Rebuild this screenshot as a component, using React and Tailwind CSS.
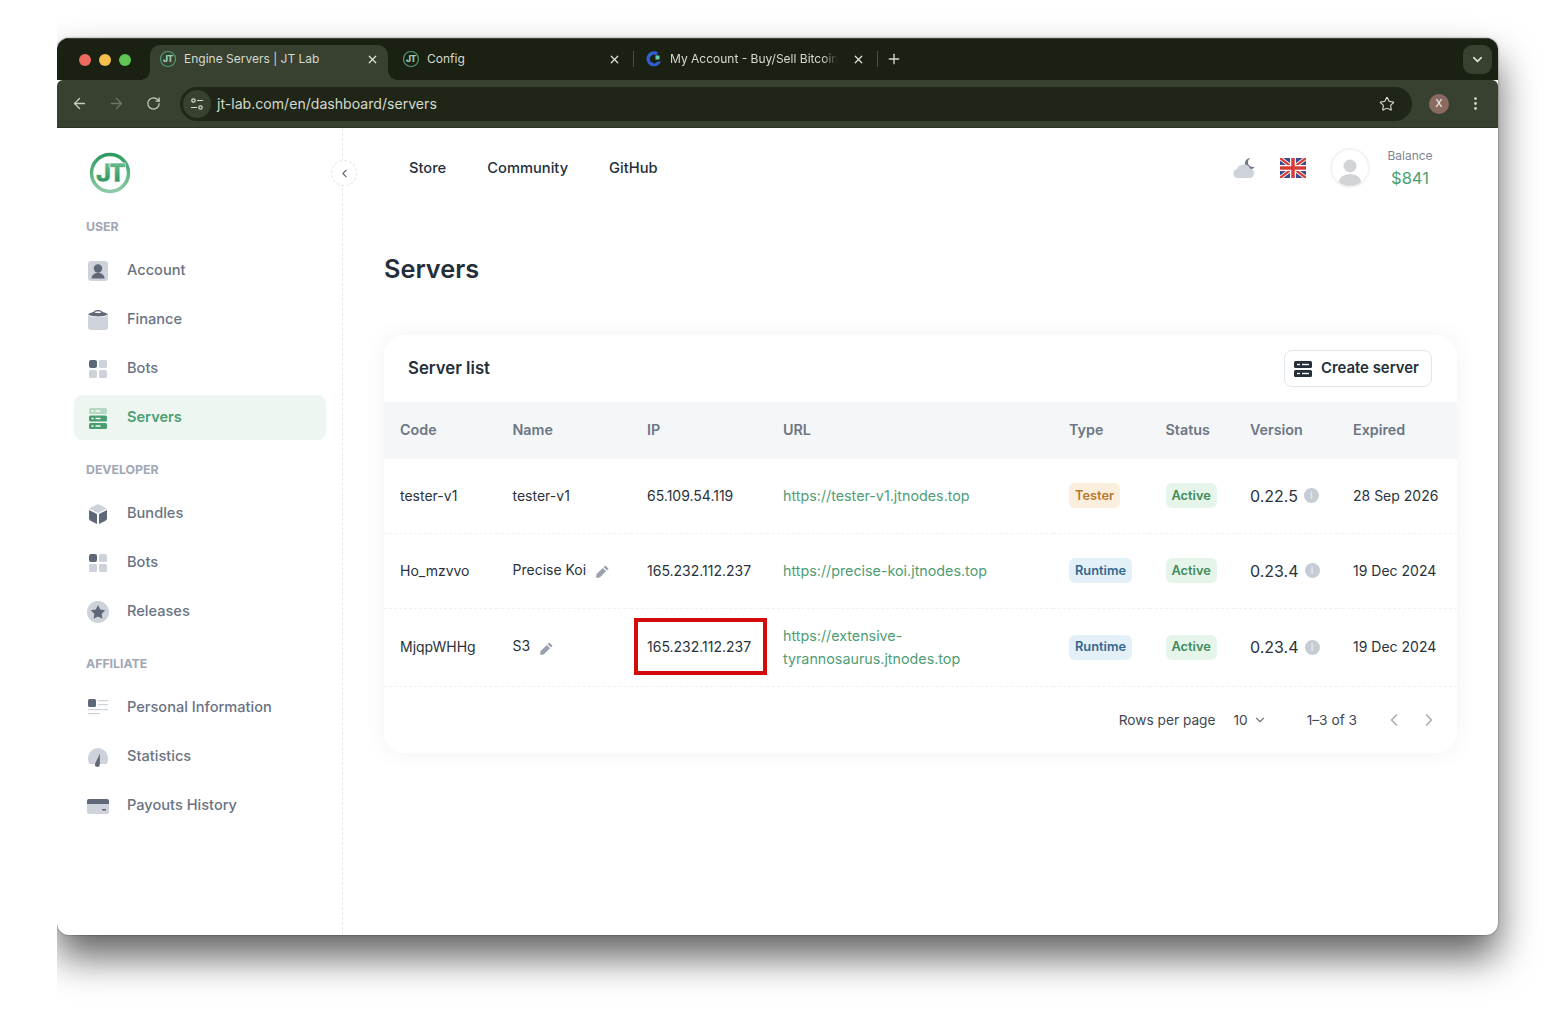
import React from "react";
import { ArrowLeft, ArrowRight, RotateCw, ChevronDown, ChevronLeft, ChevronRight, Plus, X, Star, EllipsisVertical } from "lucide-react";

const JtIcon = () => (
  <svg width="18" height="18" viewBox="0 0 18 18" className="shrink-0">
    <circle cx="9" cy="9" r="7.5" fill="none" stroke="#4f9d76" strokeWidth="1.2" />
    <text x="9" y="12" textAnchor="middle" fontSize="8.500" fontWeight="800" letterSpacing="-0.5" fill="#9fd0b3" fontFamily="Inter, sans-serif">JT</text>
  </svg>
);

const Logo = () => (
  <svg width="42" height="42" viewBox="0 0 42 42">
    <defs>
      <linearGradient id="jt-ring" x1="0" y1="0" x2="0" y2="1">
        <stop offset="0" stopColor="#2f9a62" />
        <stop offset="1" stopColor="#8ccaa5" />
      </linearGradient>
      <linearGradient id="jt-text" x1="0" y1="0" x2="0" y2="1">
        <stop offset="0" stopColor="#7cc49a" />
        <stop offset="1" stopColor="#1f8a50" />
      </linearGradient>
    </defs>
    <circle cx="21" cy="21" r="18.5" fill="none" stroke="url(#jt-ring)" strokeWidth="3.500" />
    <text x="20.500" y="30" textAnchor="middle" fontSize="26" fontWeight="900" letterSpacing="-3" fill="url(#jt-text)" stroke="#fff" strokeWidth="0.4" fontFamily="Inter, sans-serif">JT</text>
  </svg>
);

const light = "#ced2da";
const dark = "#5e6878";

const AccountIcon = () => (
  <svg width="24" height="24" viewBox="0 0 24 24">
    <rect x="2" y="2" width="20" height="20" rx="3" fill={light} />
    <circle cx="12" cy="9.5" r="4.2" fill={dark} />
    <path d="M5.5 19.5c0-3.5 3-5.5 6.5-5.5s6.500 2 6.500 5.500z" fill={dark} />
  </svg>
);
const FinanceIcon = () => (
  <svg width="24" height="24" viewBox="0 0 24 24">
    <path d="M2 7c4 3 16 3 20 0v12a3 3 0 0 1-3 3H5a3 3 0 0 1-3-3z" fill={light} />
    <path d="M2 6.500c1-1 3-2 5.500-2.500C8 2.800 9.500 2 12 2s4 .8 4.500 2c2.500.5 4.500 1.500 5.500 2.500-4 2.500-16 2.500-20 0z" fill={dark} />
    <rect x="9" y="3.500" width="6" height="1.500" rx=".7" fill="#fff" />
  </svg>
);
const BotsIcon = () => (
  <svg width="24" height="24" viewBox="0 0 24 24">
    <rect x="3" y="3" width="8" height="8" rx="2" fill={dark} />
    <rect x="13" y="3" width="8" height="8" rx="1.500" fill={light} />
    <rect x="3" y="13" width="8" height="8" rx="1.500" fill={light} />
    <rect x="13" y="13" width="8" height="8" rx="1.500" fill={light} />
  </svg>
);
const ServersIcon = () => (
  <svg width="24" height="24" viewBox="0 0 24 24">
    <rect x="3" y="2" width="18" height="6" rx="1.500" fill="#b4d9c3" />
    <rect x="3" y="9.500" width="18" height="6" rx="1.500" fill="#479e70" />
    <rect x="3" y="17" width="18" height="6" rx="1.500" fill="#479e70" />
    <rect x="5.500" y="4.300" width="2" height="1.400" fill="#fff" />
    <rect x="9.500" y="4.300" width="5" height="1.400" fill="#fff" />
    <rect x="5.500" y="11.800" width="2" height="1.400" fill="#fff" />
    <rect x="9.500" y="11.800" width="5" height="1.400" fill="#fff" />
    <rect x="5.500" y="19.300" width="2" height="1.400" fill="#fff" />
    <rect x="9.500" y="19.300" width="5" height="1.400" fill="#fff" />
  </svg>
);
const BundlesIcon = () => (
  <svg width="24" height="24" viewBox="0 0 24 24">
    <path d="M12 2l9 4.500-9 4.500-9-4.500z" fill={light} />
    <path d="M3 8l8 4v10l-6.500-3.200A2.500 2.500 0 0 1 3 16.600z" fill={dark} />
    <path d="M21 8l-8 4v10l6.500-3.200A2.500 2.500 0 0 0 21 16.600z" fill={dark} />
  </svg>
);
const ReleasesIcon = () => (
  <svg width="24" height="24" viewBox="0 0 24 24">
    <circle cx="12" cy="12" r="11" fill={light} />
    <path d="M12 5l2.200 4.600 5 .7-3.600 3.500.9 5L12 16.400l-4.500 2.400.9-5-3.600-3.500 5-.7z" fill={dark} />
  </svg>
);
const PersonalIcon = () => (
  <svg width="24" height="24" viewBox="0 0 24 24">
    <rect x="2" y="3" width="8" height="8" rx="1.500" fill={dark} />
    <rect x="12" y="4" width="10" height="1.200" fill={light} />
    <rect x="12" y="8" width="10" height="1.200" fill={light} />
    <rect x="2" y="13" width="20" height="1.200" fill={light} />
    <rect x="2" y="17" width="12" height="1.200" fill={light} />
  </svg>
);
const StatsIcon = () => (
  <svg width="24" height="24" viewBox="0 0 24 24">
    <path d="M2 13a10 10 0 0 1 20 0c0 2.500-.5 4.500-1.500 6H3.500C2.500 17.500 2 15.500 2 13z" fill={light} />
    <path d="M14 8.500l-.2 11.300a2.400 2.400 0 1 1-4.600-1.200z" fill={dark} />
  </svg>
);
const PayoutsIcon = () => (
  <svg width="24" height="24" viewBox="0 0 24 24">
    <path d="M1 8h22v10a2 2 0 0 1-2 2H3a2 2 0 0 1-2-2z" fill={light} />
    <path d="M3 5h18a2 2 0 0 1 2 2v3H1V7a2 2 0 0 1 2-2z" fill={dark} />
    <rect x="16" y="15" width="4" height="1.500" fill={dark} />
  </svg>
);

const sections = [
  { title: "USER", items: [
    { label: "Account", icon: AccountIcon },
    { label: "Finance", icon: FinanceIcon },
    { label: "Bots", icon: BotsIcon },
    { label: "Servers", icon: ServersIcon, active: true },
  ] },
  { title: "DEVELOPER", items: [
    { label: "Bundles", icon: BundlesIcon },
    { label: "Bots", icon: BotsIcon },
    { label: "Releases", icon: ReleasesIcon },
  ] },
  { title: "AFFILIATE", items: [
    { label: "Personal Information", icon: PersonalIcon },
    { label: "Statistics", icon: StatsIcon },
    { label: "Payouts History", icon: PayoutsIcon },
  ] },
];

const Tab = ({ title, active, className, icon, divider, fade }) => (
  <div className={`relative flex h-[35px] items-center pb-[7px] ${active ? "rounded-t-[10px] bg-[#384030]" : ""} ${className}`}>
    {active && <span className="absolute bottom-0 -left-[10px] h-[10px] w-[10px] bg-[radial-gradient(circle_at_0_0,transparent_10px,#384030_10px)]" />}
    {active && <span className="absolute bottom-0 -right-[10px] h-[10px] w-[10px] bg-[radial-gradient(circle_at_100%_0,transparent_10px,#384030_10px)]" />}
    {icon}
    <span className={`ml-[7px] min-w-0 flex-1 overflow-hidden text-xs whitespace-nowrap text-[#d5dacf] ${fade ? "[mask-image:linear-gradient(to_right,black_84%,transparent_92%)]" : ""}`}>{title}</span>
    <X size={13} strokeWidth={2.200} className="shrink-0 text-[#dfe3da]" />
    {divider && <span className="absolute top-[6px] right-0 h-[16px] w-px bg-[#4a5243]" />}
  </div>
);

const Badge = ({ color, children }) => {
  const styles = {
    orange: "bg-[#fbeedd] text-[#b7772f]",
    blue: "bg-[#e3f0f8] text-[#33678f]",
    green: "bg-[#e6f5ea] text-[#3d8a5c]",
  };
  return <span className={`inline-block rounded-md px-[6px] py-[4.500px] text-[12.800px] leading-[16px] font-semibold ${styles[color]}`}>{children}</span>;
};

const Pencil = () => (
  <svg width="15" height="15" viewBox="0 0 16 16" className="ml-[9px] inline-block">
    <path d="M11 1.500l3.500 3.500-1.800 1.800-3.500-3.500zM8.300 4.200l3.500 3.500L5 14.500l-3.700.3.200-3.800z" fill="#9aa1ad" />
  </svg>
);

const Info = () => (
  <span className="ml-[6px] inline-flex h-[15px] w-[15px] items-center justify-center rounded-full bg-[#c6ccd5] text-[10px] font-semibold text-[#e8ebef]">i</span>
);

const rows = [
  { code: "tester-v1", name: "tester-v1", ip: "65.109.54.119", url: ["https://tester-v1.jtnodes.top"], type: "Tester", color: "orange", version: "0.22.5", expired: "28 Sep 2026", h: "h-[74px]" },
  { code: "Ho_mzvvo", name: "Precise Koi", edit: true, ip: "165.232.112.237", url: ["https://precise-koi.jtnodes.top"], type: "Runtime", color: "blue", version: "0.23.4", expired: "19 Dec 2024", h: "h-[75px]" },
  { code: "MjqpWHHg", name: "S3", edit: true, ip: "165.232.112.237", marked: true, url: ["https://extensive-", "tyrannosaurus.jtnodes.top"], type: "Runtime", color: "blue", version: "0.23.4", expired: "19 Dec 2024", h: "h-[78px]" },
];

const headers = [
  ["Code", "w-[112.500px]"],
  ["Name", "w-[134.500px]"],
  ["IP", "w-[136px]"],
  ["URL", "w-[286px]"],
  ["Type", "w-[96.500px]"],
  ["Status", "w-[84.500px]"],
  ["Version", "w-[103px]"],
  ["Expired", "w-[120px]"],
];

export default function App() {
  return (
    <div className="h-[1011px] w-[1554px] overflow-hidden bg-white font-['Inter',sans-serif]">
      <div className="ml-[57px] h-full overflow-hidden pt-[38px]">
        <div className="flex h-[897px] w-[1441px] flex-col overflow-hidden rounded-[12px] bg-white shadow-[0_22px_38px_rgba(0,0,0,0.62),0_0_2px_rgba(0,0,0,0.5)]">
          {/* browser chrome */}
          <div className="flex h-[42px] shrink-0 items-end border-t border-[#3c4436] bg-[#1a2113] pl-[22px]">
            <div className="mr-[19px] flex gap-[8px] self-center">
              <span className="h-[12px] w-[12px] rounded-full bg-[#ec6a5e]" />
              <span className="h-[12px] w-[12px] rounded-full bg-[#f4bf4f]" />
              <span className="h-[12px] w-[12px] rounded-full bg-[#61c554]" />
            </div>
            <Tab title="Engine Servers | JT Lab" active className="w-[238px] pr-[9px] pl-[9px]" icon={<JtIcon />} />
            <div className="w-[4px]" />
            <Tab title="Config" className="w-[242px] pr-[13px] pl-[10px]" icon={<JtIcon />} divider />
            <div className="w-[1px]" />
            <Tab title="My Account - Buy/Sell Bitcoin" fade className="w-[243px] pr-[13px] pl-[10px]" divider icon={
              <svg width="18" height="18" viewBox="0 0 18 18" className="shrink-0">
                <path d="M13 2.500A7.500 7.500 0 1 0 16 11.500h-3.500A4.200 4.200 0 1 1 11.500 5.500z" fill="#2f5fd0" />
                <rect x="10.500" y="5.500" width="4" height="4" fill="#5fd3a6" />
              </svg>
            } />
            <div className="flex h-[35px] w-[32px] items-center justify-center pb-[7px] text-[#d5dacf]">
              <Plus size={16} />
            </div>
            <div className="flex-1" />
            <div className="mr-[6px] mb-[6px] flex h-[29px] w-[29px] items-center justify-center rounded-[9px] bg-[#384030] text-[#dfe3da]">
              <ChevronDown size={15} strokeWidth={2.500} />
            </div>
          </div>
          <div className="flex h-[48px] shrink-0 items-center rounded-t-[6px] border-b border-[#2c3327] bg-[#384030] pr-[14px] pl-[14px] text-[#c8cdc3]">
            <ArrowLeft size={17} strokeWidth={1.800} />
            <ArrowRight size={17} strokeWidth={1.800} className="ml-[20px] text-[#6e7568]" />
            <RotateCw size={15} strokeWidth={2} className="ml-[21px]" />
            <div className="ml-[19px] flex h-[34px] flex-1 items-center rounded-full bg-[#1f2618] pr-[17px] pl-[3px]">
              <div className="flex h-[28px] w-[28px] items-center justify-center rounded-full bg-[#384030]">
                <svg width="14" height="14" viewBox="0 0 14 14" fill="none" stroke="#d5dacf" strokeWidth="1.200">
                  <circle cx="3.500" cy="3.500" r="1.700" />
                  <circle cx="10.500" cy="10.500" r="1.700" />
                  <path d="M7 3.500h6M1 10.500h6" />
                </svg>
              </div>
              <span className="ml-[6px] flex-1 text-[14.100px] text-[#d5dacf]">jt-lab.com/en/dashboard/servers</span>
              <Star size={16} strokeWidth={1.600} className="text-[#dfe3da]" />
            </div>
            <div className="ml-[17px] flex h-[20px] w-[20px] items-center justify-center rounded-full bg-[#8a6b62] text-[10px] text-white">X</div>
            <EllipsisVertical size={17} className="ml-[18px] text-[#d5dacf]" />
          </div>

          <div className="flex min-h-0 flex-1">
            {/* sidebar */}
            <aside className="relative w-[286px] shrink-0 border-r border-dashed border-[#e6e8ec] pr-[16px] pl-[17px]">
              <div className="flex h-[89px] items-start pt-[24px] pl-[15px]">
                <Logo />
              </div>
              <button className="absolute top-[32px] -right-[15px] flex h-[26px] w-[26px] items-center justify-center rounded-full border border-dashed border-[#e1e3ea] bg-white text-[#5e6878]">
                <ChevronLeft size={13} />
              </button>
              {sections.map((section, i) => (
                <div key={section.title} className={i > 0 ? "mt-[20px]" : ""}>
                  <div className="mb-[11px] h-[20px] pl-[12px] text-[12.300px] leading-[20px] font-bold text-[#a1a8b5]">{section.title}</div>
                  <div className="flex flex-col gap-[4px]">
                    {section.items.map((item) => (
                      <div key={section.title + item.label} className={`flex h-[45px] items-center rounded-lg pl-[12px] text-[14.600px] font-medium ${item.active ? "bg-[#eef6f1] font-semibold text-[#4a9f72]" : "text-[#6a7383]"}`}>
                        <item.icon />
                        <span className="ml-[17px]">{item.label}</span>
                      </div>
                    ))}
                  </div>
                </div>
              ))}
            </aside>

            {/* main */}
            <main className="min-w-0 flex-1">
              <header className="flex h-[80px] items-center justify-between pr-[65px] pl-[66px]">
                <nav className="flex gap-[41px] text-[14.700px] font-medium text-[#252f3a]">
                  <span>Store</span>
                  <span>Community</span>
                  <span>GitHub</span>
                </nav>
                <div className="flex items-center">
                  <svg width="24" height="24" viewBox="0 0 24 24">
                    <path d="M18.500 2a5.500 5.500 0 1 0 4.500 8.500 4.500 4.500 0 0 1-4.500-8.500z" fill="#6f7886" />
                    <path d="M6 22a4.500 4.500 0 0 1-1-8.900A7 7 0 0 1 18 12.500a4.800 4.800 0 0 1 0 9.500z" fill="#ced2da" />
                  </svg>
                  <svg width="26" height="20" viewBox="0 0 26 20" className="ml-[24px]">
                    <rect width="26" height="20" rx="2" fill="#3d4a8c" />
                    <path d="M0 0l26 20M26 0L0 20" stroke="#fff" strokeWidth="4" />
                    <path d="M0 0l26 20M26 0L0 20" stroke="#d83a34" strokeWidth="2.200" />
                    <path d="M13 0v20M0 10h26" stroke="#fff" strokeWidth="6" />
                    <path d="M13 0v20M0 10h26" stroke="#d83a34" strokeWidth="3.500" />
                  </svg>
                  <div className="ml-[24px] flex h-[40px] w-[40px] items-end justify-center overflow-hidden rounded-full border-2 border-[#f2f3f5] bg-white">
                    <svg width="28" height="30" viewBox="0 0 28 30">
                      <circle cx="14" cy="10" r="6.500" fill="#d2d4d8" />
                      <path d="M2 30c0-8 5-12 12-12s12 4 12 12z" fill="#d2d4d8" />
                    </svg>
                  </div>
                  <div className="ml-[17px] w-[46px] text-center">
                    <div className="pt-[1px] text-xs leading-[16px] text-[#7e8694]">Balance</div>
                    <div className="mt-[2px] text-[16.500px] leading-[24px] text-[#4a9f72]">$841</div>
                  </div>
                </div>
              </header>

              <div className="pr-[41px] pl-[41px]">
                <h1 className="mt-[45px] mb-[50px] text-[25.300px] leading-[32px] font-semibold text-[#252f3a]">Servers</h1>

                <section className="h-[418px] overflow-hidden rounded-[20px] bg-white shadow-[0_0_20px_rgba(76,87,125,0.08)]">
                  <div className="flex h-[67px] items-center justify-between pr-[25px] pl-[24px]">
                    <h2 className="text-[16.800px] font-semibold text-[#252f3a]">Server list</h2>
                    <button className="flex h-[37px] items-center gap-[9px] rounded-lg border border-[#e2e4ec] pr-[12px] pl-[9px] text-[14.900px] font-semibold text-[#252f3a]">
                      <svg width="18" height="16" viewBox="0 0 18 16">
                        <rect x="0" y="0" width="18" height="7" rx="1.500" fill="#252f3a" />
                        <rect x="0" y="9" width="18" height="7" rx="1.500" fill="#252f3a" />
                        <rect x="3" y="2.800" width="3" height="1.400" fill="#fff" />
                        <rect x="8" y="2.800" width="7" height="1.400" fill="#fff" />
                        <rect x="3" y="11.800" width="3" height="1.400" fill="#fff" />
                        <rect x="8" y="11.800" width="7" height="1.400" fill="#fff" />
                      </svg>
                      Create server
                    </button>
                  </div>
                  <table className="w-full table-fixed border-collapse text-left text-sm text-[#2a323c]">
                    <thead>
                      <tr className="h-[57px] bg-[#f4f6f8]">
                        {headers.map(([label, w]) => (
                          <th key={label} className={`${w} px-4 text-[14.300px] font-semibold text-[#6d7684]`}>{label}</th>
                        ))}
                      </tr>
                    </thead>
                    <tbody>
                      {rows.map((row) => (
                        <tr key={row.code} className={`${row.h} border-b border-dashed border-[#eff1f4]`}>
                          <td className="px-4">{row.code}</td>
                          <td className="px-4">
                            <span className={row.edit ? "relative -top-[1px]" : ""}>{row.name}</span>
                            {row.edit && <Pencil />}
                          </td>
                          <td className="relative px-4">
                            {row.ip}
                            {row.marked && <span className="absolute top-[9px] left-[3px] h-[57px] w-[133px] border-[4px] border-[#d40b0b]" />}
                          </td>
                          <td className="px-4 text-[14.300px] leading-[23px] text-[#4f9d76]">
                            {row.url.map((part) => <div key={part}>{part}</div>)}
                          </td>
                          <td className="px-4"><Badge color={row.color}>{row.type}</Badge></td>
                          <td className="px-4"><Badge color="green">Active</Badge></td>
                          <td className="px-4 text-base">
                            <div className="flex items-center whitespace-nowrap">{row.version}<Info /></div>
                          </td>
                          <td className="whitespace-nowrap px-4">{row.expired}</td>
                        </tr>
                      ))}
                    </tbody>
                  </table>
                  <div className="flex h-[67px] items-center justify-end pr-[18px] text-[13.700px] text-[#3f4754]">
                    <span>Rows per page</span>
                    <span className="ml-[18px]">10</span>
                    <ChevronDown size={14} className="ml-[5px] text-[#6d7684]" />
                    <span className="ml-[40px]">1–3 of 3</span>
                    <ChevronLeft size={20} className="ml-[27px] text-[#a8adb6]" />
                    <ChevronRight size={20} className="ml-[15px] text-[#a8adb6]" />
                  </div>
                </section>
              </div>
            </main>
          </div>
        </div>
      </div>
    </div>
  );
}
